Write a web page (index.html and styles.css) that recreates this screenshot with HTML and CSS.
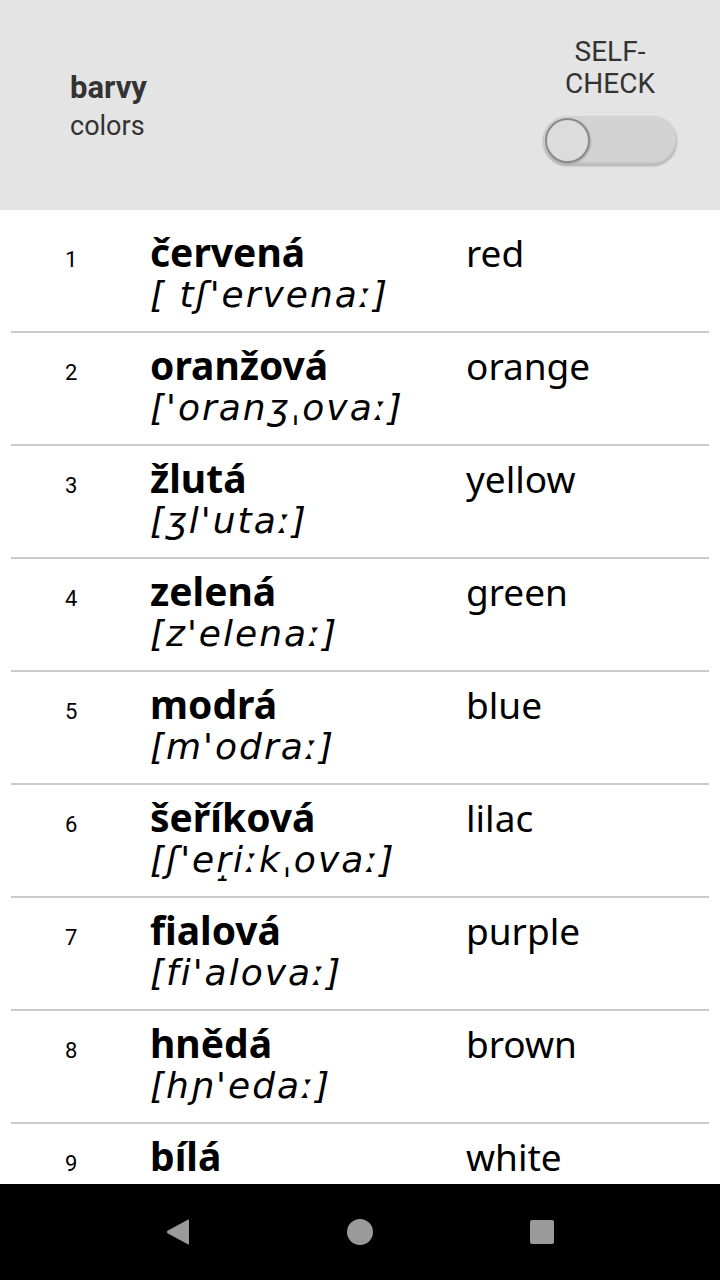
FILE: index.html
```html
<!DOCTYPE html>
<html lang="en">
<head>
    <meta charset="UTF-8">
    <meta name="viewport" content="width=device-width, initial-scale=1.0">
    <title>barvy</title>
    <link rel="stylesheet" href="styles.css">
</head>
<body>
    <div class="screen">
        <header class="topbar">
            <div class="topic">
                <div class="topic-cz">barvy</div>
                <div class="topic-en">colors</div>
            </div>
            <div class="selfcheck">
                <div class="selfcheck-label">SELF-<br>CHECK</div>
                <div class="switch"><div class="switch-thumb"></div></div>
            </div>
        </header>

        <div class="list">
            <div class="row">
                <div class="num">1</div>
                <div class="word">
                    <div class="word-cz">červená</div>
                    <div class="word-ipa">[ tʃ'ervenaː]</div>
                </div>
                <div class="word-en">red</div>
            </div>
            <div class="row">
                <div class="num">2</div>
                <div class="word">
                    <div class="word-cz">oranžová</div>
                    <div class="word-ipa">['oranʒˌovaː]</div>
                </div>
                <div class="word-en">orange</div>
            </div>
            <div class="row">
                <div class="num">3</div>
                <div class="word">
                    <div class="word-cz">žlutá</div>
                    <div class="word-ipa">[ʒl'utaː]</div>
                </div>
                <div class="word-en">yellow</div>
            </div>
            <div class="row">
                <div class="num">4</div>
                <div class="word">
                    <div class="word-cz">zelená</div>
                    <div class="word-ipa">[z'elenaː]</div>
                </div>
                <div class="word-en">green</div>
            </div>
            <div class="row">
                <div class="num">5</div>
                <div class="word">
                    <div class="word-cz">modrá</div>
                    <div class="word-ipa">[m'odraː]</div>
                </div>
                <div class="word-en">blue</div>
            </div>
            <div class="row">
                <div class="num">6</div>
                <div class="word">
                    <div class="word-cz">šeříková</div>
                    <div class="word-ipa">[ʃ'er̝iːkˌovaː]</div>
                </div>
                <div class="word-en">lilac</div>
            </div>
            <div class="row">
                <div class="num">7</div>
                <div class="word">
                    <div class="word-cz">fialová</div>
                    <div class="word-ipa">[fi'alovaː]</div>
                </div>
                <div class="word-en">purple</div>
            </div>
            <div class="row">
                <div class="num">8</div>
                <div class="word">
                    <div class="word-cz">hnědá</div>
                    <div class="word-ipa">[hɲ'edaː]</div>
                </div>
                <div class="word-en">brown</div>
            </div>
            <div class="row">
                <div class="num">9</div>
                <div class="word">
                    <div class="word-cz">bílá</div>
                    <div class="word-ipa">[b'iːlaː]</div>
                </div>
                <div class="word-en">white</div>
            </div>
        </div>

        <nav class="navbar">
            <svg class="nav-icon" width="26" height="28" viewBox="0 0 26 28">
                <path d="M24 2.5 L24 25.5 Q24 27 22.8 26.2 L2.5 15.2 Q1.1 14 2.5 12.8 L22.8 1.8 Q24 1 24 2.5 Z" fill="#9a9a9a"/>
            </svg>
            <svg class="nav-icon" width="28" height="28" viewBox="0 0 28 28">
                <circle cx="14" cy="14" r="13" fill="#9a9a9a"/>
            </svg>
            <svg class="nav-icon" width="26" height="26" viewBox="0 0 26 26">
                <rect x="1" y="1" width="24" height="24" rx="2" fill="#9a9a9a"/>
            </svg>
        </nav>
    </div>
</body>
</html>
```

FILE: styles.css
```css
html, body {
    margin: 0;
    padding: 0;
}

body {
    font-family: 'Noto Sans', sans-serif;
    background-color: #ffffff;
    color: #000;
}

.screen {
    display: flex;
    flex-direction: column;
    width: 720px;
    height: 1280px;
    overflow: hidden;
}

/* header */
.topbar {
    flex: 0 0 210px;
    display: flex;
    align-items: center;
    justify-content: space-between;
    padding: 0 43px 0 70px;
    background-color: #e4e4e4;
    font-family: Roboto, sans-serif;
    color: #333;
    box-sizing: border-box;
}

.topic {
    margin-top: 4px;
}

.topic-cz {
    font-size: 31px;
    font-weight: bold;
    line-height: 39px;
}

.topic-en {
    font-size: 27px;
    line-height: 39px;
}

.selfcheck {
    display: flex;
    flex-direction: column;
    align-items: center;
    margin-bottom: 9px;
}

.selfcheck-label {
    font-size: 28px;
    line-height: 32px;
    text-align: center;
    margin-bottom: 16px;
}

.switch {
    width: 134px;
    height: 49px;
    border-radius: 25px;
    background-color: #d3d3d3;
    box-shadow: inset 0 -2px 3px rgba(0, 0, 0, 0.12), 0 1px 2px rgba(0, 0, 0, 0.25);
    display: flex;
    align-items: center;
    padding-left: 2px;
    box-sizing: border-box;
}

.switch-thumb {
    width: 45px;
    height: 45px;
    border-radius: 50%;
    background-color: #dcdcdc;
    border: 2px solid #8a8a8a;
    box-sizing: border-box;
    box-shadow: 1px 1px 2px rgba(0, 0, 0, 0.2);
}

/* word list */
.list {
    flex: 1;
    overflow: hidden;
    padding: 10px 11px 0 11px;
}

.row {
    display: flex;
    align-items: baseline;
    height: 113px;
    padding-top: 11px;
    border-bottom: 2px solid #cbcbcb;
    box-sizing: border-box;
}

.num {
    width: 139px;
    padding-left: 54px;
    box-sizing: border-box;
    font-family: Roboto, sans-serif;
    font-size: 22px;
}

.word {
    width: 316px;
}

.word-cz {
    font-size: 39px;
    font-weight: bold;
    line-height: 41px;
}

.word-ipa {
    font-family: 'DejaVu Sans', sans-serif;
    font-size: 36px;
    font-style: italic;
    letter-spacing: 2px;
    line-height: 41px;
    margin-top: 2px;
}

.word-en {
    font-size: 37px;
    line-height: 41px;
}

/* system navigation */
.navbar {
    flex: 0 0 96px;
    display: flex;
    align-items: center;
    justify-content: center;
    gap: 155px;
    background-color: #000;
}
```
